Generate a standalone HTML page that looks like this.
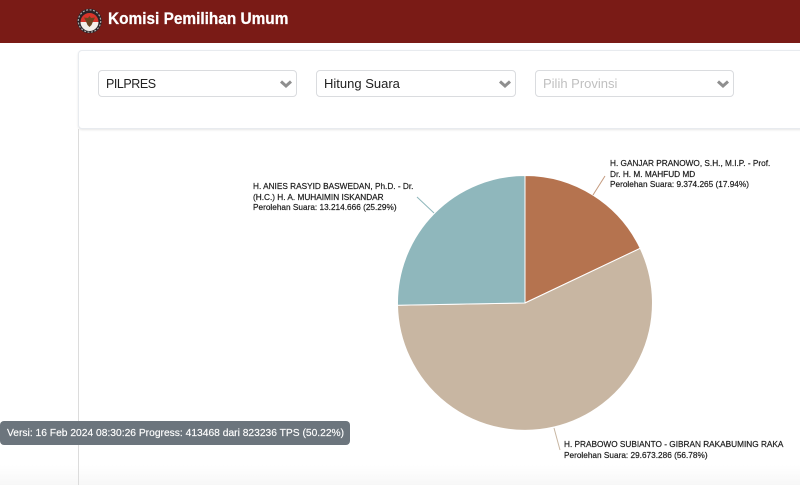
<!DOCTYPE html>
<html>
<head>
<meta charset="utf-8">
<style>
html,body{margin:0;padding:0;width:800px;height:485px;overflow:hidden;background:#fff;font-family:"Liberation Sans",sans-serif}
.hdr{position:absolute;left:0;top:0;width:800px;height:43px;background:#7a1b16}
.title{position:absolute;left:107.5px;top:8px;font-size:17px;line-height:22px;font-weight:bold;color:#fff;white-space:nowrap;transform:scaleX(.905);transform-origin:left center;-webkit-text-stroke:.25px #fff}
.card{position:absolute;left:78px;top:50px;width:740px;height:77px;background:#fff;border:1px solid #e8ebef;border-radius:4px;box-shadow:0 1px 2px rgba(0,0,0,.1)}
.vl{position:absolute;left:78px;top:129px;width:1px;height:356px;background:#dcdcdc}
.sel{position:absolute;top:70px;width:197px;height:25px;border:1px solid #dadcdf;border-radius:4px;background:#fff;font-size:13px;line-height:26px;color:#222}
.sel span{position:absolute;left:7px;top:0;white-space:nowrap}
.sel svg{position:absolute;right:3px;top:7px}
.lbl{position:absolute;font-size:8.25px;line-height:10.5px;color:#1c1c1c;white-space:nowrap;-webkit-text-stroke:.2px #1c1c1c}
.ver{position:absolute;left:0;top:421px;width:350px;height:24px;background:#6c757d;border-radius:4px;color:#fff;font-size:10.27px;line-height:25px;box-sizing:border-box;padding-left:7px;white-space:nowrap;-webkit-text-stroke:.15px #fff}
.fade{position:absolute;left:0;top:465px;width:800px;height:20px;background:linear-gradient(#fff,#f7f7f7)}
</style>
</head>
<body>
<div class="fade"></div>
<div class="hdr"></div>
<svg style="position:absolute;left:77px;top:8px" width="25" height="26" viewBox="0 0 25 26">
<circle cx="12.5" cy="13" r="12.3" fill="#2a2226"/>
<circle cx="12.5" cy="13" r="11.2" fill="none" stroke="#a9a6a6" stroke-width="1.2" stroke-dasharray="2 1.5"/>
<path d="M3.5 14 A9 9 0 0 1 21.5 14 Z" fill="#d7342a"/>
<path d="M3.5 14 A9 9 0 0 0 21.5 14 Z" fill="#f4efe9"/>
<path d="M12.5 8 L14 10 L18 9.5 L16 13.5 L14.5 17 L12.5 19 L10.5 17 L9 13.5 L7 9.5 L11 10 Z" fill="#6a4420"/>
</svg>
<div class="title">Komisi Pemilihan Umum</div>
<div class="card"></div>
<div class="vl"></div>
<div class="sel" style="left:98px"><span style="font-size:12.5px;letter-spacing:-.45px">PILPRES</span><svg width="14" height="12" viewBox="0 0 14 12"><path d="M2 3.5 L7 8 L12 3.5" fill="none" stroke="#8f8f8f" stroke-width="3"/></svg></div>
<div class="sel" style="left:316px;width:198px"><span>Hitung Suara</span><svg width="14" height="12" viewBox="0 0 14 12"><path d="M2 3.5 L7 8 L12 3.5" fill="none" stroke="#8f8f8f" stroke-width="3"/></svg></div>
<div class="sel" style="left:535px;color:#c0c0c0"><span>Pilih Provinsi</span><svg width="14" height="12" viewBox="0 0 14 12"><path d="M2 3.5 L7 8 L12 3.5" fill="none" stroke="#8f8f8f" stroke-width="3"/></svg></div>
<svg style="position:absolute;left:0;top:0" width="800" height="485" viewBox="0 0 800 485">
<path d="M525 303 L525 175.5 A127.5 127.5 0 0 1 640.2 248.3 Z" fill="#b5734f" stroke="#fff" stroke-width="1"/>
<path d="M525 303 L640.2 248.3 A127.5 127.5 0 1 1 397.5 305.2 Z" fill="#c8b6a2" stroke="#fff" stroke-width="1"/>
<path d="M525 303 L397.5 305.2 A127.5 127.5 0 0 1 525 175.5 Z" fill="#8fb7bc" stroke="#fff" stroke-width="1"/>
<path d="M593 195 L605 176" stroke="#c49a7e" fill="none"/>
<path d="M434 213 L417 197" stroke="#8fb7bc" fill="none"/>
<path d="M554 428 L560 450" stroke="#c8b6a2" fill="none"/>
</svg>
<div class="lbl" style="left:253px;top:182px">H. ANIES RASYID BASWEDAN, Ph.D. - Dr.<br>(H.C.) H. A. MUHAIMIN ISKANDAR<br>Perolehan Suara: 13.214.666 (25.29%)</div>
<div class="lbl" style="left:610px;top:159px">H. GANJAR PRANOWO, S.H., M.I.P. - Prof.<br>Dr. H. M. MAHFUD MD<br>Perolehan Suara: 9.374.265 (17.94%)</div>
<div class="lbl" style="left:564px;top:440px">H. PRABOWO SUBIANTO - GIBRAN RAKABUMING RAKA<br>Perolehan Suara: 29.673.286 (56.78%)</div>
<div class="ver">Versi: 16 Feb 2024 08:30:26 Progress: 413468 dari 823236 TPS (50.22%)</div>
</body>
</html>
